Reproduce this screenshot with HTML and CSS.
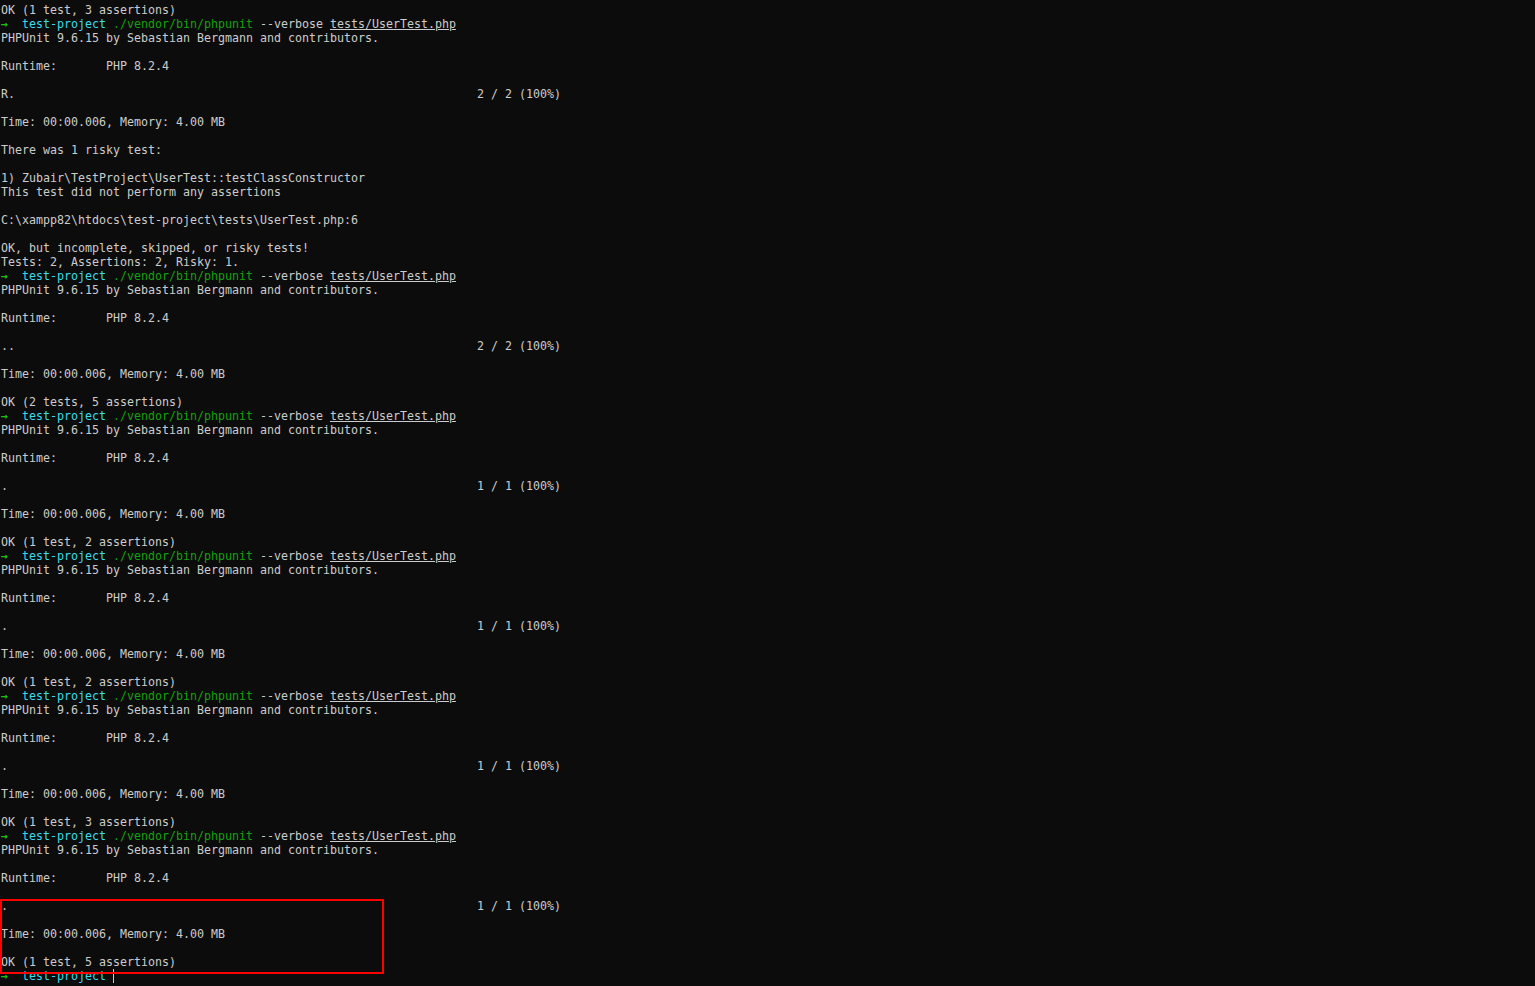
FILE: index.html
```html
<!DOCTYPE html>
<html>
<head>
<meta charset="utf-8">
<title>Terminal</title>
<link rel="stylesheet" href="styles.css">
</head>
<body>

<div class="terminal">
<pre class="output">OK (1 test, 3 assertions)
<span class="arrow">→</span>  <span class="dir">test-project</span> <span class="cmd">./vendor/bin/phpunit</span> --verbose <span class="file">tests/UserTest.php</span>
PHPUnit 9.6.15 by Sebastian Bergmann and contributors.

Runtime:       PHP 8.2.4

R.                                                                  2 / 2 (100%)

Time: 00:00.006, Memory: 4.00 MB

There was 1 risky test:

1) Zubair\TestProject\UserTest::testClassConstructor
This test did not perform any assertions

C:\xampp82\htdocs\test-project\tests\UserTest.php:6

OK, but incomplete, skipped, or risky tests!
Tests: 2, Assertions: 2, Risky: 1.
<span class="arrow">→</span>  <span class="dir">test-project</span> <span class="cmd">./vendor/bin/phpunit</span> --verbose <span class="file">tests/UserTest.php</span>
PHPUnit 9.6.15 by Sebastian Bergmann and contributors.

Runtime:       PHP 8.2.4

..                                                                  2 / 2 (100%)

Time: 00:00.006, Memory: 4.00 MB

OK (2 tests, 5 assertions)
<span class="arrow">→</span>  <span class="dir">test-project</span> <span class="cmd">./vendor/bin/phpunit</span> --verbose <span class="file">tests/UserTest.php</span>
PHPUnit 9.6.15 by Sebastian Bergmann and contributors.

Runtime:       PHP 8.2.4

.                                                                   1 / 1 (100%)

Time: 00:00.006, Memory: 4.00 MB

OK (1 test, 2 assertions)
<span class="arrow">→</span>  <span class="dir">test-project</span> <span class="cmd">./vendor/bin/phpunit</span> --verbose <span class="file">tests/UserTest.php</span>
PHPUnit 9.6.15 by Sebastian Bergmann and contributors.

Runtime:       PHP 8.2.4

.                                                                   1 / 1 (100%)

Time: 00:00.006, Memory: 4.00 MB

OK (1 test, 2 assertions)
<span class="arrow">→</span>  <span class="dir">test-project</span> <span class="cmd">./vendor/bin/phpunit</span> --verbose <span class="file">tests/UserTest.php</span>
PHPUnit 9.6.15 by Sebastian Bergmann and contributors.

Runtime:       PHP 8.2.4

.                                                                   1 / 1 (100%)

Time: 00:00.006, Memory: 4.00 MB

OK (1 test, 3 assertions)
<span class="arrow">→</span>  <span class="dir">test-project</span> <span class="cmd">./vendor/bin/phpunit</span> --verbose <span class="file">tests/UserTest.php</span>
PHPUnit 9.6.15 by Sebastian Bergmann and contributors.

Runtime:       PHP 8.2.4

.                                                                   1 / 1 (100%)

Time: 00:00.006, Memory: 4.00 MB

OK (1 test, 5 assertions)
<span class="arrow">→</span>  <span class="dir">test-project</span> <span class="cursor"></span></pre>

<!-- markering rundt siste resultat -->
<div class="highlight"></div>
</div>

</body>
</html>
```

FILE: styles.css
```css
html, body {
margin: 0;
padding: 0;
background-color: #0c0c0c;
}
.terminal {
position: relative;
min-height: 986px;
padding: 3px 0 0 1px;
box-sizing: border-box;
}
.output {
margin: 0;
font-family: 'DejaVu Sans Mono', 'Liberation Mono', monospace;
font-size: 11.63px;
line-height: 14px;
color: #cccccc;
}
.arrow {
color: #16c60c;
font-weight: bold;
}
.dir {
color: #3adcec;
}
.cmd {
color: #13a10e;
}
.file {
text-decoration: underline;
}
.cursor {
display: inline-block;
width: 1px;
height: 14px;
background-color: #cccccc;
vertical-align: top;
}
.highlight {
position: absolute;
left: 0;
top: 899px;
width: 384px;
height: 75px;
border: 2px solid #ff0000;
box-sizing: border-box;
}
```
